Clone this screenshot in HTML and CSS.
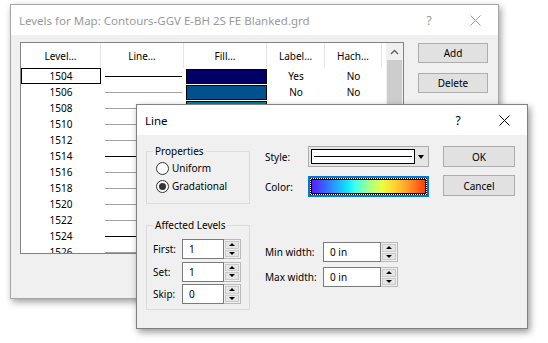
FILE: index.html
```html
<!DOCTYPE html>
<html>
<head>
<meta charset="utf-8">
<title>Levels for Map</title>
<link rel="stylesheet" href="styles.css">
</head>
<body>
<div class="desktop">
  <section class="win win-back">
    <header class="titlebar inactive">
      <span class="title">Levels for Map: Contours-GGV E-BH 2S FE Blanked.grd</span>
      <span class="tbtn">?</span>
      <span class="tbtn"><svg width="11" height="11" viewBox="0 0 11 11"><path d="M0.5 0.5L10.5 10.5M10.5 0.5L0.5 10.5" stroke="currentColor" stroke-width="1" fill="none"/></svg></span>
    </header>
    <div class="back-body">
      <div class="listbox">
        <div class="list-table">
          <div class="lrow head">
            <div class="c">Level…</div>
            <div class="c">Line…</div>
            <div class="c">Fill…</div>
            <div class="c">Label…</div>
            <div class="c">Hach…</div>
            <div class="c filler"></div>
          </div>
          <div class="lrow">
            <div class="c sel">1504</div>
            <div class="c"><span class="ln dark"></span></div>
            <div class="c"><span class="fill" style="background:#000066"></span></div>
            <div class="c">Yes</div>
            <div class="c">No</div>
            <div class="c"></div>
          </div>
          <div class="lrow">
            <div class="c">1506</div>
            <div class="c"><span class="ln"></span></div>
            <div class="c"><span class="fill" style="background:#00528f"></span></div>
            <div class="c">No</div>
            <div class="c">No</div>
            <div class="c"></div>
          </div>
          <div class="lrow">
            <div class="c">1508</div>
            <div class="c"><span class="ln"></span></div>
            <div class="c"><span class="fill" style="background:#00829c"></span></div>
            <div class="c">No</div>
            <div class="c">No</div>
            <div class="c"></div>
          </div>
          <div class="lrow"><div class="c">1510</div><div class="c"><span class="ln"></span></div><div class="c"></div><div class="c"></div><div class="c"></div><div class="c"></div></div>
          <div class="lrow"><div class="c">1512</div><div class="c"><span class="ln"></span></div><div class="c"></div><div class="c"></div><div class="c"></div><div class="c"></div></div>
          <div class="lrow"><div class="c">1514</div><div class="c"><span class="ln dark"></span></div><div class="c"></div><div class="c"></div><div class="c"></div><div class="c"></div></div>
          <div class="lrow"><div class="c">1516</div><div class="c"><span class="ln"></span></div><div class="c"></div><div class="c"></div><div class="c"></div><div class="c"></div></div>
          <div class="lrow"><div class="c">1518</div><div class="c"><span class="ln"></span></div><div class="c"></div><div class="c"></div><div class="c"></div><div class="c"></div></div>
          <div class="lrow"><div class="c">1520</div><div class="c"><span class="ln"></span></div><div class="c"></div><div class="c"></div><div class="c"></div><div class="c"></div></div>
          <div class="lrow"><div class="c">1522</div><div class="c"><span class="ln"></span></div><div class="c"></div><div class="c"></div><div class="c"></div><div class="c"></div></div>
          <div class="lrow"><div class="c">1524</div><div class="c"><span class="ln dark"></span></div><div class="c"></div><div class="c"></div><div class="c"></div><div class="c"></div></div>
          <div class="lrow"><div class="c">1526</div><div class="c"><span class="ln"></span></div><div class="c"></div><div class="c"></div><div class="c"></div><div class="c"></div></div>
        </div>
        <div class="vscroll">
          <div class="sb-arrow"><svg width="9" height="6" viewBox="0 0 9 6"><path d="M1 5L4.5 1.5L8 5" stroke="#606060" stroke-width="1.4" fill="none"/></svg></div>
          <div class="sb-thumb"></div>
        </div>
      </div>
      <div class="side">
        <button class="btn">Add</button>
        <button class="btn">Delete</button>
      </div>
    </div>
  </section>

  <section class="win win-front">
    <header class="titlebar">
      <span class="title">Line</span>
      <span class="tbtn">?</span>
      <span class="tbtn"><svg width="11" height="11" viewBox="0 0 11 11"><path d="M0.5 0.5L10.5 10.5M10.5 0.5L0.5 10.5" stroke="currentColor" stroke-width="1" fill="none"/></svg></span>
    </header>
    <div class="front-body">
      <div class="col-left">
        <div class="group g-props">
          <div class="glabel">Properties</div>
          <div class="radio"><span class="rb"></span><span>Uniform</span></div>
          <div class="radio"><span class="rb on"></span><span>Gradational</span></div>
        </div>
        <div class="group g-levels">
          <div class="glabel">Affected Levels</div>
          <div class="lv-grid">
            <span>First:</span>
            <div class="spin"><span class="spin-val">1</span><span class="spin-btns"><i class="up"></i><i class="dn"></i></span></div>
            <span>Set:</span>
            <div class="spin"><span class="spin-val">1</span><span class="spin-btns"><i class="up"></i><i class="dn"></i></span></div>
            <span>Skip:</span>
            <div class="spin"><span class="spin-val">0</span><span class="spin-btns"><i class="up"></i><i class="dn"></i></span></div>
          </div>
        </div>
      </div>
      <div class="col-mid">
        <div class="frow">
          <span class="flabel">Style:</span>
          <div class="combo"><div class="combo-field"><span class="combo-line"></span></div><span class="combo-arrow"></span></div>
        </div>
        <div class="frow f-color">
          <span class="flabel">Color:</span>
          <div class="colorbox"><div class="focus-ring"><div class="gradient"></div></div></div>
        </div>
        <div class="wrow w-min">
          <span class="wlabel">Min width:</span>
          <div class="spin wide"><span class="spin-val">0 in</span><span class="spin-btns"><i class="up"></i><i class="dn"></i></span></div>
        </div>
        <div class="wrow w-max">
          <span class="wlabel">Max width:</span>
          <div class="spin wide"><span class="spin-val">0 in</span><span class="spin-btns"><i class="up"></i><i class="dn"></i></span></div>
        </div>
      </div>
      <div class="col-right">
        <button class="btn dlg">OK</button>
        <button class="btn dlg cancel">Cancel</button>
      </div>
    </div>
  </section>
</div>
</body>
</html>
```

FILE: styles.css
```css
* { box-sizing: border-box; }
html, body { margin: 0; padding: 0; }
body {
  background: #ffffff;
  width: 548px;
  height: 343px;
  overflow: hidden;
  font-family: "Noto Sans", "Open Sans", sans-serif;
  font-size: 10px;
  color: #000;
}
.desktop { position: relative; width: 548px; height: 343px; }

.win {
  position: absolute;
  display: flex;
  flex-direction: column;
  background: #f0f0f0;
}
.win-back {
  left: 10px; top: 4px; width: 489px; height: 295px;
  border: 1px solid #a6a6a6;
  box-shadow: 2px 3px 7px rgba(0,0,0,0.38);
}
.win-front {
  left: 136px; top: 104px; width: 392px; height: 225px;
  border: 1px solid #808080;
  box-shadow: 2px 3px 7px rgba(0,0,0,0.42);
}

.titlebar {
  flex: none;
  height: 30px;
  background: #fff;
  display: flex;
  align-items: center;
  padding-left: 8px;
  font-size: 11.5px;
  color: #000;
}
.titlebar.inactive { color: #999; }
.titlebar .title { flex: 1; white-space: nowrap; overflow: hidden; }
.tbtn {
  flex: none;
  width: 46px; height: 30px;
  display: flex; align-items: center; justify-content: center;
  font-size: 12px;
}

/* ---- back dialog ---- */
.back-body {
  flex: 1;
  display: flex;
  align-items: flex-start;
  padding: 7px 0 0 9px;
}
.listbox {
  flex: none;
  width: 384px; height: 212px;
  border: 1px solid #828282;
  background: #fff;
  display: flex;
  overflow: hidden;
}
.list-table { flex: none; width: 365px; }
.lrow {
  display: grid;
  grid-template-columns: 80px 83px 83px 58px 57px 4px;
  height: 16px;
}
.lrow.head { height: 25px; }
.lrow .c {
  display: flex; align-items: center; justify-content: center;
  white-space: nowrap;
  line-height: 14px;
}
.lrow.head .c { border-right: 1px solid #e5e5e5; }
.lrow.head .c.filler { border-right: none; }
.c.sel { border: 1px solid #000; }
.ln { display: block; width: 77px; height: 1px; background: #a0a0a0; margin-left: 2px; }
.ln.dark { background: #000; }
.fill { display: block; width: 81px; height: 15px; border: 1px solid #000; margin-left: 1px; }

.vscroll { flex: 1; background: #f0f0f0; display: flex; flex-direction: column; }
.sb-arrow { height: 17px; display: flex; align-items: center; justify-content: center; }
.sb-thumb { flex: 1; margin: 0 1px; background: #cdcdcd; }

.side { display: flex; flex-direction: column; gap: 10px; margin-left: 14px; padding-top: 1px; }
.btn {
  font-family: inherit; font-size: 10px; color: #000;
  width: 70px; height: 20px;
  background: #e1e1e1;
  border: 1px solid #adadad;
  padding: 0;
  margin: 0;
}

/* ---- front dialog ---- */
.front-body { flex: 1; display: flex; align-items: flex-start; padding-left: 9px; }
.col-left { width: 104px; margin-top: 16px; display: flex; flex-direction: column; }
.group { border: 1px solid #dcdcdc; }
.glabel {
  align-self: flex-start;
  display: inline-block;
  margin: -9px 0 0 6px;
  padding: 0 2px;
  background: #f0f0f0;
  line-height: 16px;
  font-size: 10px;
}
.g-props { height: 53px; display: flex; flex-direction: column; padding-left: 9px; }
.g-props .glabel { margin-left: -3px; }
.radio { display: flex; align-items: center; height: 18px; gap: 3px; font-size: 10px; }
.radio:first-of-type { margin-top: 2px; }
.rb {
  width: 13px; height: 13px; border-radius: 50%;
  border: 1px solid #333; background: #fff;
  display: flex; align-items: center; justify-content: center;
}
.rb.on::after { content: ""; width: 7px; height: 7px; border-radius: 50%; background: #333; }

.g-levels { height: 85px; margin-top: 21px; display: flex; flex-direction: column; }
.lv-grid {
  display: grid;
  grid-template-columns: 29px 59px;
  grid-auto-rows: 20px;
  row-gap: 2.5px;
  align-items: center;
  padding-left: 6px;
  margin-top: 6px;
  font-size: 10px;
}

.spin { display: flex; width: 59px; height: 20px; }
.spin.wide { width: 75px; }
.spin-val {
  flex: 1;
  background: #fff;
  border: 1px solid #7a7a7a;
  padding-left: 6px;
  line-height: 18px;
  font-size: 10px;
}
.spin-btns {
  flex: none;
  width: 17px;
  border: 1px solid #b9b9b9;
  border-left: none;
  background: #f0f0f0;
  display: flex; flex-direction: column;
  padding: 1px;
  gap: 1px;
}
.spin-btns i {
  flex: 1;
  display: flex; align-items: center; justify-content: center;
  background: #e6e6e6;
  border: 1px solid #cacaca;
}
.spin-btns i.up::after {
  content: ""; border-left: 3px solid transparent; border-right: 3px solid transparent; border-bottom: 3px solid #000;
}
.spin-btns i.dn::after {
  content: ""; border-left: 3px solid transparent; border-right: 3px solid transparent; border-top: 3px solid #000;
}

.col-mid { width: 164px; margin-left: 15px; margin-top: 11px; display: flex; flex-direction: column; font-size: 10px; }
.frow { display: flex; align-items: center; height: 21px; }
.f-color { margin-top: 9px; }
.flabel { width: 43px; }
.combo {
  width: 121px; height: 21px;
  border: 1px solid #adadad;
  background: #e5e5e5;
  display: flex; align-items: center;
  padding: 2px;
}
.combo-field {
  width: 104px; height: 15px;
  border: 1px solid #000;
  background: #fff;
  display: flex; align-items: center;
  padding: 0 2px;
}
.combo-line { flex: 1; height: 1px; background: #000; }
.combo-arrow { flex: 1; display: flex; justify-content: center; }
.combo-arrow::after {
  content: ""; border-left: 3.5px solid transparent; border-right: 3.5px solid transparent; border-top: 4px solid #000;
}
.colorbox {
  width: 121px; height: 21px;
  border: 2px solid #0078d7;
  background: #fff;
}
.focus-ring { width: 100%; height: 100%; border: 1px dotted #000; background: #fff; }
.gradient {
  width: 100%; height: 100%;
  border: 1px solid #000;
  background: linear-gradient(to right,
    #5a1eff 0%, #3a5cff 10%, #2a9cff 20%, #10e8ff 32%, #40fff0 38%,
    #a0ff90 50%, #eaff40 62%, #ffd030 74%, #ff9a25 85%, #ff3c14 100%);
}
.wrow { display: flex; align-items: center; height: 20px; }
.w-min { margin-top: 45px; }
.w-max { margin-top: 5px; }
.wlabel { width: 58px; }

.col-right { width: 72px; margin-left: 14px; margin-top: 11px; display: flex; flex-direction: column; }
.btn.dlg { width: 72px; height: 21px; font-size: 10px; }
.btn.cancel { margin-top: 8px; }
```
